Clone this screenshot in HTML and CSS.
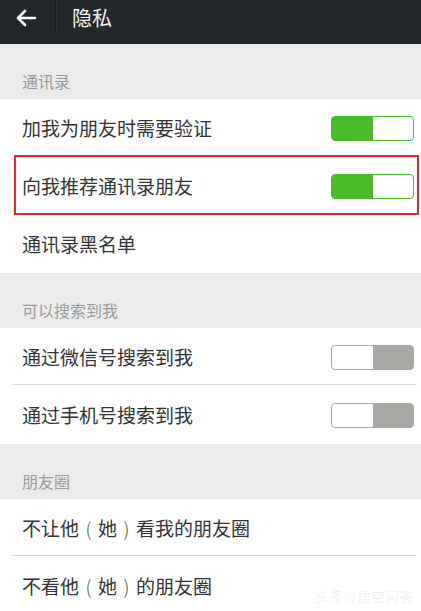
FILE: index.html
```html
<!DOCTYPE html>
<html lang="zh-CN">
<head>
<meta charset="utf-8">
<title>隐私</title>
<link rel="stylesheet" href="styles.css">
</head>
<body>
<div class="screen">
  <header class="topbar">
    <div class="back">
      <svg width="22" height="18" viewBox="0 0 22 18">
        <path d="M20 9H3 M10 2L3 9L10 16" fill="none" stroke="#ffffff" stroke-width="2.6" stroke-linecap="round" stroke-linejoin="round"/>
      </svg>
    </div>
    <div class="vdiv"></div>
    <div class="title">隐私</div>
  </header>

  <div class="section">通讯录</div>
  <div class="group">
    <div class="row">
      <span class="label">加我为朋友时需要验证</span>
      <span class="toggle on"></span>
    </div>
    <div class="row highlighted">
      <span class="label">向我推荐通讯录朋友</span>
      <span class="toggle on"></span>
    </div>
    <div class="row">
      <span class="label">通讯录黑名单</span>
    </div>
  </div>

  <div class="section">可以搜索到我</div>
  <div class="group">
    <div class="row lined">
      <span class="label">通过微信号搜索到我</span>
      <span class="toggle off"></span>
    </div>
    <div class="row">
      <span class="label">通过手机号搜索到我</span>
      <span class="toggle off"></span>
    </div>
  </div>

  <div class="section">朋友圈</div>
  <div class="group">
    <div class="row lined">
      <span class="label">不让他<span class="par">(</span>她<span class="par">)</span>看我的朋友圈</span>
    </div>
    <div class="row">
      <span class="label">不看他<span class="par">(</span>她<span class="par">)</span>的朋友圈</span>
    </div>
  </div>

  <div class="watermark">头条@悟空问答</div>
</div>
</body>
</html>
```

FILE: styles.css
```css
html, body {
  margin: 0;
  padding: 0;
  background: #ffffff;
}
.screen {
  position: relative;
  width: 421px;
  height: 611px;
  overflow: hidden;
  font-family: "Noto Sans CJK SC", "Noto Sans", sans-serif;
  background: #ffffff;
}
.topbar {
  height: 44px;
  background: #21272b;
  display: flex;
  align-items: center;
  box-sizing: border-box;
  padding-bottom: 9px;
}
.back {
  width: 55px;
  display: flex;
  justify-content: center;
  padding-right: 4px;
  box-sizing: border-box;
}
.back svg {
  display: block;
}
.vdiv {
  width: 1px;
  height: 34px;
  align-self: flex-start;
  background: #161a1d;
  box-shadow: 1px 0 0 #2b3236;
}
.title {
  margin-left: 16px;
  color: #f4f4f4;
  font-size: 20px;
  line-height: 24px;
}
.section {
  height: 55px;
  box-sizing: border-box;
  padding: 26px 0 0 22px;
  background: #ebebeb;
  color: #9a9a9a;
  font-size: 16px;
  line-height: 22px;
}
.group {
  background: #ffffff;
}
.row {
  position: relative;
  height: 58px;
  display: flex;
  align-items: center;
  justify-content: space-between;
  padding: 0 7px 0 22px;
  box-sizing: border-box;
}
.row.lined::before {
  content: "";
  position: absolute;
  left: 12px;
  right: 4px;
  bottom: 1px;
  height: 1px;
  background: #dcdcdc;
}
.label {
  color: #333333;
  font-size: 19px;
  line-height: 24px;
  white-space: nowrap;
}
.par {
  display: inline-block;
  width: 19px;
  text-align: center;
  font-weight: 300;
  color: #555555;
}
.row.highlighted::after {
  content: "";
  position: absolute;
  left: 14px;
  right: 2px;
  top: -2px;
  bottom: 0;
  border: 2px solid #e8262b;
  pointer-events: none;
}
.toggle {
  width: 83px;
  height: 25px;
  box-sizing: border-box;
  border-radius: 4px;
  flex: none;
}
.toggle.on {
  border: 1.5px solid #4bbb29;
  background: linear-gradient(to right, #4bbb29 0, #4bbb29 51%, #ffffff 51%, #ffffff 100%);
}
.toggle.off {
  border: 1.5px solid #a6a9a4;
  background: linear-gradient(to right, #ffffff 0, #ffffff 51%, #a6a9a4 51%, #a6a9a4 100%);
}
.watermark {
  position: absolute;
  right: 8px;
  bottom: 6px;
  color: #f0f0f0;
  font-size: 14px;
  line-height: 18px;
}
```
